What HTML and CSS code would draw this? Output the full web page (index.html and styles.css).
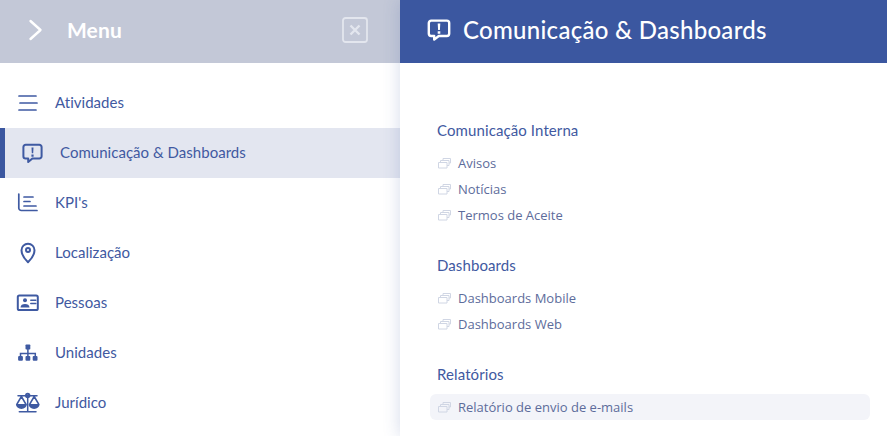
FILE: index.html
```html
<!DOCTYPE html>
<html lang="pt-BR">
<head>
<meta charset="utf-8">
<title>Comunicação &amp; Dashboards</title>
<link rel="stylesheet" href="styles.css">
</head>
<body>
<div class="app">
  <aside class="menu">
    <header class="menu-head">
      <svg class="chev" width="24" height="24" viewBox="0 0 24 24"><path d="M6.500 3l10 9-10 9"/></svg>
      <span class="menu-title">Menu</span>
      <svg class="close" width="26" height="26" viewBox="0 0 26 26"><rect x="1" y="1" width="24" height="24" rx="2.500"/><path class="x" d="M8.500 8.500l9 9M17.500 8.500l-9 9"/></svg>
    </header>
    <nav class="menu-list">
      <a class="item">
        <svg class="ic" width="26" height="24" viewBox="0 0 26 24"><path class="hb" d="M4 5h17M5 12h17M4 19h17"/></svg>
        <span class="lbl">Atividades</span>
      </a>
      <a class="item active">
        <svg class="ic" width="26" height="24" viewBox="0 0 26 24"><path class="ln" d="M5.600 3.800h13.800a2.200 2.200 0 0 1 2.200 2.200v9.200a2.200 2.200 0 0 1-2.200 2.200h-7l-4.200 3.600v-3.600H5.600a2.200 2.200 0 0 1-2.200-2.200V6a2.200 2.200 0 0 1 2.200-2.200z"/><path class="fl" d="M11.500 6.500h2l-.3 5.800h-1.400zM11.400 13.600h2.200v2.200h-2.200z"/></svg>
        <span class="lbl">Comunicação &amp; Dashboards</span>
      </a>
      <a class="item">
        <svg class="ic" width="26" height="24" viewBox="0 0 26 24"><path class="hb" d="M3.800 3v14a2.500 2.500 0 0 0 2.500 2.500H22M9 6h9M9 10.500h6M9 15h12"/></svg>
        <span class="lbl">KPI's</span>
      </a>
      <a class="item">
        <svg class="ic" width="26" height="24" viewBox="0 0 26 24"><path class="ln" d="M13 21.200S6.500 15 6.500 9.200a6.500 6.500 0 0 1 13 0C19.500 15 13 21.200 13 21.200z"/><circle class="ln" cx="13" cy="9" r="2"/></svg>
        <span class="lbl">Localização</span>
      </a>
      <a class="item">
        <svg class="ic" width="26" height="24" viewBox="0 0 26 24"><rect class="ln" x="2.800" y="4.500" width="20" height="14.500" rx="1.600"/><circle class="fl" cx="10" cy="9.300" r="2"/><path class="fl" d="M5.500 16.500c0-2.600 2-3.600 4.500-3.600s4.500 1 4.500 3.600z"/><path class="thin" d="M15.800 9.200h5M15.800 12.400h5"/></svg>
        <span class="lbl">Pessoas</span>
      </a>
      <a class="item">
        <svg class="ic" width="26" height="24" viewBox="0 0 26 24"><path class="thin" d="M12.900 8v7.500M5.500 15.500v-3h14.800v3"/><rect class="fl" x="10.500" y="3.500" width="4.800" height="5" rx=".8"/><rect class="fl" x="3.100" y="15" width="4.800" height="4.800" rx="1"/><rect class="fl" x="10.500" y="15" width="4.800" height="4.800" rx="1"/><rect class="fl" x="17.700" y="15" width="4.800" height="4.800" rx="1"/></svg>
        <span class="lbl">Unidades</span>
      </a>
      <a class="item">
        <svg class="ic" width="26" height="24" viewBox="0 0 26 24"><path class="thin" d="M3 4.800h19M12.700 5v15.300M4.300 20.700h16.700M6.400 5.500L2 13M6.400 5.500L10.800 13M19.200 5.500L14.800 13M19.200 5.500L23.600 13"/><circle class="ln" cx="12.700" cy="4.400" r="1.700"/><path class="fl" d="M.9 13h11a5.500 5 0 0 1-11 0zM13.600 13h11a5.500 5 0 0 1-11 0z"/></svg>
        <span class="lbl">Jurídico</span>
      </a>
    </nav>
  </aside>
  <main class="panel">
    <header class="panel-head">
      <svg class="panel-ic" width="24" height="24" viewBox="0 0 24 24"><path d="M4.200 2.600h15.600a2.400 2.400 0 0 1 2.400 2.400v10.600a2.400 2.400 0 0 1-2.400 2.400h-8l-4.600 3.600V18H4.200a2.400 2.400 0 0 1-2.400-2.400V5a2.400 2.400 0 0 1 2.400-2.400z"/><path class="pf" d="M10.700 5.600h2.600l-.4 6.400h-1.800zM10.700 13.300h2.600v2.500h-2.600z"/></svg>
      <h1>Comunicação &amp; Dashboards</h1>
    </header>
    <div class="panel-body">
      <section class="group">
        <h2>Comunicação Interna</h2>
        <a class="link"><svg class="cp" width="14" height="12" viewBox="0 0 14 12"><path d="M1.500 5.500h8.500v5.500h-8.500zM3.500 5.500v-2h8.500v5h-2M6 3.500v-2h7.500v4.500h-1.500"/></svg>Avisos</a>
        <a class="link"><svg class="cp" width="14" height="12" viewBox="0 0 14 12"><path d="M1.500 5.500h8.500v5.500h-8.500zM3.500 5.500v-2h8.500v5h-2M6 3.500v-2h7.500v4.500h-1.500"/></svg>Notícias</a>
        <a class="link"><svg class="cp" width="14" height="12" viewBox="0 0 14 12"><path d="M1.500 5.500h8.500v5.500h-8.500zM3.500 5.500v-2h8.500v5h-2M6 3.500v-2h7.500v4.500h-1.500"/></svg>Termos de Aceite</a>
      </section>
      <section class="group">
        <h2>Dashboards</h2>
        <a class="link"><svg class="cp" width="14" height="12" viewBox="0 0 14 12"><path d="M1.500 5.500h8.500v5.500h-8.500zM3.500 5.500v-2h8.500v5h-2M6 3.500v-2h7.500v4.500h-1.500"/></svg>Dashboards Mobile</a>
        <a class="link"><svg class="cp" width="14" height="12" viewBox="0 0 14 12"><path d="M1.500 5.500h8.500v5.500h-8.500zM3.500 5.500v-2h8.500v5h-2M6 3.500v-2h7.500v4.500h-1.500"/></svg>Dashboards Web</a>
      </section>
      <section class="group">
        <h2>Relatórios</h2>
        <a class="link hover"><svg class="cp" width="14" height="12" viewBox="0 0 14 12"><path d="M1.500 5.500h8.500v5.500h-8.500zM3.500 5.500v-2h8.500v5h-2M6 3.500v-2h7.500v4.500h-1.500"/></svg>Relatório de envio de e-mails</a>
      </section>
    </div>
  </main>
</div>
</body>
</html>
```
FILE: styles.css
```css
* { box-sizing: border-box; }
html, body { margin: 0; height: 100%; overflow: hidden; background: #fff; }
.app { display: flex; width: 887px; height: 436px; }

.menu { width: 400px; flex: none; }
.menu-head {
  height: 63px;
  background: #c3c8d7;
  display: flex;
  align-items: center;
  padding-left: 24px;
  padding-bottom: 4px;
}
.chev { fill: none; stroke: #fff; stroke-width: 2.4; stroke-linecap: round; stroke-linejoin: round; flex: none; }
.menu-title {
  margin-left: 19px;
  color: #fff;
  font: 700 21px "Lato", sans-serif;
  letter-spacing: .1px;
}
.close {
  margin-left: auto;
  margin-right: 32px;
  fill: none;
  stroke: #e3e6ee;
  stroke-width: 1.8;
}
.close .x { stroke-width: 2.4; }
.menu-list { padding-top: 15px; }
.item {
  height: 50px;
  display: flex;
  align-items: center;
  gap: 14px;
  padding-left: 15px;
  color: #4159a1;
  font: 400 15px "Lato", sans-serif;
  letter-spacing: .03px;
}
.lbl { padding-bottom: 2px; }
.item.active {
  background: #e3e6f0;
  border-left: 5px solid #3b57a0;
}
.ic { flex: none; }
.ln { fill: none; stroke: #3f5aa2; stroke-width: 2; stroke-linecap: round; stroke-linejoin: round; }
.hb { fill: none; stroke: #3f5aa2; stroke-width: 1.7; stroke-linecap: round; stroke-linejoin: round; }
.thin { fill: none; stroke: #3f5aa2; stroke-width: 1.5; stroke-linecap: round; }
.fl { fill: #3f5aa2; }

.panel {
  width: 487px;
  flex: none;
  background: #fff;
  box-shadow: 0 0 16px rgba(59, 87, 160, .22);
  position: relative;
}
.panel-head {
  height: 63px;
  background: #3b57a0;
  display: flex;
  align-items: center;
  padding-left: 27px;
  padding-bottom: 4px;
  gap: 12px;
}
.panel-ic { fill: none; stroke: #fff; stroke-width: 2.4; stroke-linejoin: round; flex: none; }
.panel-ic .pf { fill: #fff; stroke: none; }
h1 {
  margin: 0;
  color: #fff;
  font: 500 24px "Lato", sans-serif;
  letter-spacing: .28px;
}
.panel-body { padding: 56px 17px 0 30px; }
.group { margin-bottom: 26px; }
h2 {
  margin: 0 0 7px 7px;
  height: 24px;
  color: #4159a1;
  font: 400 15px/22px "Lato", sans-serif;
  letter-spacing: .1px;
}
.link {
  display: flex;
  align-items: center;
  height: 26px;
  padding-left: 7px;
  border-radius: 6px;
  color: #5d6c9b;
  font: 400 13px "Open Sans", sans-serif;
}
.link.hover { background: #f3f4f9; }
.cp {
  flex: none;
  margin-right: 7px;
  fill: none;
  stroke: #d0d6e4;
  stroke-width: 1;
}
```
